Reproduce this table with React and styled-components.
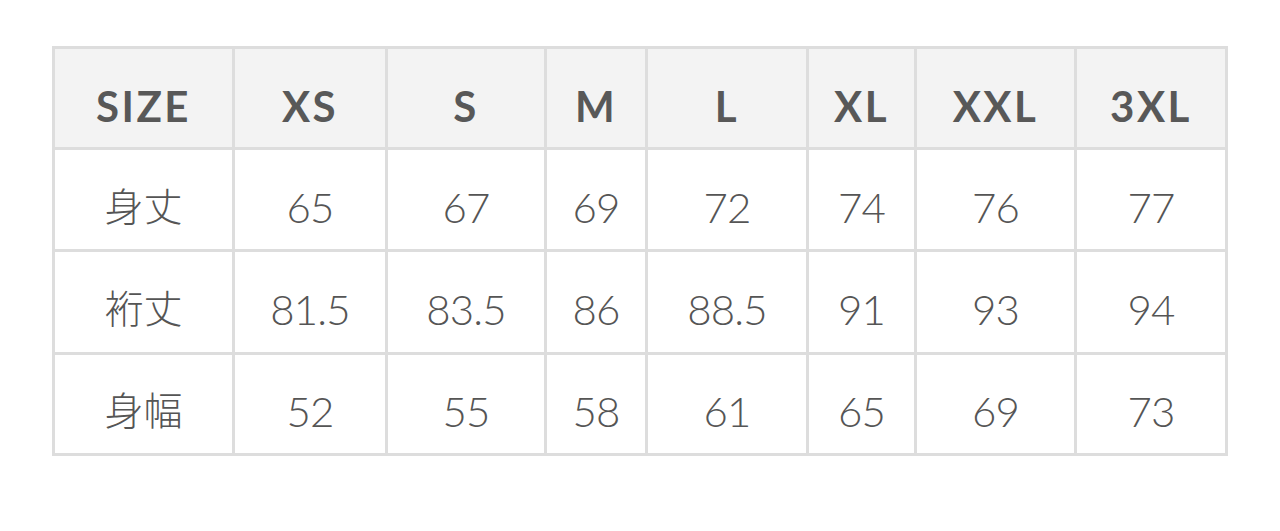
import React from 'react';
import styled, { createGlobalStyle } from 'styled-components';

const GlobalStyle = createGlobalStyle`
  html, body {
    margin: 0;
    padding: 0;
    background: #ffffff;
  }
  body {
    font-family: Lato, "Noto Sans CJK JP", sans-serif;
  }
`;

const columns = [177, 150, 156, 98, 158, 105, 157, 148];
const rowHeights = [98, 99, 100, 98];

const sizes = ['XS', 'S', 'M', 'L', 'XL', 'XXL', '3XL'];

const rows = [
  { label: '身丈', values: ['65', '67', '69', '72', '74', '76', '77'] },
  { label: '裄丈', values: ['81.5', '83.5', '86', '88.5', '91', '93', '94'] },
  { label: '身幅', values: ['52', '55', '58', '61', '65', '69', '73'] },
];

const App = () => {
  return (
    <Page>
      <GlobalStyle />
      <Table
        $cols={columns.map((w) => `${w}px`).join(' ')}
        $rows={rowHeights.map((h) => `${h}px`).join(' ')}
      >
        <HeadCell>SIZE</HeadCell>
        {sizes.map((s) => (
          <HeadCell key={s}>{s}</HeadCell>
        ))}
        {rows.map((row) => (
          <React.Fragment key={row.label}>
            <LabelCell>{row.label}</LabelCell>
            {row.values.map((v, i) => (
              <Cell key={i}>{v}</Cell>
            ))}
          </React.Fragment>
        ))}
      </Table>
    </Page>
  );
};

const Page = styled.div`
  padding: 46px 0 0 52px;
  height: 531px;
  box-sizing: border-box;
`;

const Table = styled.div`
  display: inline-grid;
  grid-template-columns: ${(p) => p.$cols};
  grid-template-rows: ${(p) => p.$rows};
  gap: 3px;
  padding: 3px;
  background: #dddddd;
`;

const BaseCell = styled.div`
  display: flex;
  align-items: center;
  justify-content: center;
  background: #ffffff;
  color: #555555;
  box-sizing: border-box;
  padding-top: 14px;
  white-space: nowrap;
`;

const HeadCell = styled(BaseCell)`
  background: #f3f3f3;
  font-family: Lato, sans-serif;
  font-weight: 700;
  font-size: 42px;
  letter-spacing: 2.5px;
  padding-top: 16px;
  color: #585858;
`;

const Cell = styled(BaseCell)`
  font-family: Lato, sans-serif;
  font-weight: 300;
  font-size: 42px;
  letter-spacing: -0.8px;
`;

const LabelCell = styled(BaseCell)`
  font-family: "Noto Sans CJK JP", sans-serif;
  font-weight: 300;
  font-size: 39px;
  padding-top: 8px;
`;

export default App;
